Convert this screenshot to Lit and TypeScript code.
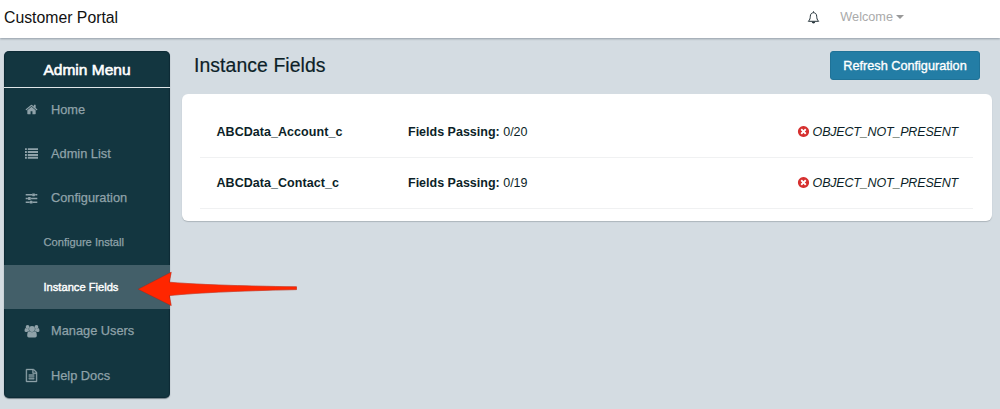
import { LitElement, html, css, svg } from "lit";
import { customElement } from "lit/decorators.js";
import { classMap } from "lit/directives/class-map.js";

const icons: Record<string, unknown> = {
  home: svg`<path d="M1472 992v480q0 26-19 45t-45 19h-384v-384h-256v384h-384q-26 0-45-19t-19-45v-480q0-1 .5-3t.5-3l575-474 575 474q1 2 1 6zm223-69l-62 74q-8 9-21 11h-3q-13 0-21-7l-692-577-692 577q-12 8-24 7-13-2-21-11l-62-74q-8-10-7-23.5t11-21.5l719-599q32-26 76-26t76 26l244 204v-195q0-14 9-23t23-9h192q14 0 23 9t9 23v408l219 182q10 8 11 21.5t-7 23.5z"/>`,
  list: svg`<path d="M0 160h256v270H0zM384 160h1408v270H384zM0 560h256v270H0zM384 560h1408v270H384zM0 960h256v270H0zM384 960h1408v270H384zM0 1360h256v270H0zM384 1360h1408v270H384z"/>`,
  sliders: svg`<path d="M96 290h870v190H96zM1400 290h296v190h-296zM1050 192h256q64 0 64 64v256q0 64-64 64h-256q-64 0-64-64V256q0-64 64-64zM96 802h296v190H96zM832 802h864v190H832zM480 704h256q64 0 64 64v256q0 64-64 64H480q-64 0-64-64V768q0-64 64-64zM96 1314h530v190H96zM1060 1314h636v190h-636zM716 1216h256q64 0 64 64v256q0 64-64 64H716q-64 0-64-64v-256q0-64 64-64z"/>`,
  users: svg`<circle cx="330" cy="384" r="245"/><circle cx="1462" cy="384" r="245"/><circle cx="896" cy="640" r="375"/><path d="M520 896q-150 5-245 128H145Q-60 1024-60 850q0-330 160-330 20 0 70 40t160 40q90 0 150-30-10 180 40 326zM1272 896q150 5 245 128h130q205 0 205-174 0-330-160-330-20 0-70 40t-160 40q-90 0-150-30 10 180-40 326zM560 940q-280 0-280 560 0 230 210 230h812q210 0 210-230 0-560-280-560-30 0-100 60t-236 60-236-60-100-60z"/>`,
  file: svg`<path d="M1596 380q28 28 48 76t20 88v1152q0 40-28 68t-68 28h-1344q-40 0-68-28t-28-68v-1600q0-40 28-68t68-28h896q40 0 88 20t76 48zm-444-244v376h376q-10-29-22-41l-313-313q-12-12-41-22zm384 1528v-1024h-416q-40 0-68-28t-28-68v-416h-768v1536h1280zm-1024-864q0-14 9-23t23-9h704q14 0 23 9t9 23v64q0 14-9 23t-23 9h-704q-14 0-23-9t-9-23v-64zm736 224q14 0 23 9t9 23v64q0 14-9 23t-23 9h-704q-14 0-23-9t-9-23v-64q0-14 9-23t23-9h704zm0 256q14 0 23 9t9 23v64q0 14-9 23t-23 9h-704q-14 0-23-9t-9-23v-64q0-14 9-23t23-9h704z"/>`,
  error: svg`<path d="M1277 1122q0-26-19-45l-181-181 181-181q19-19 19-45 0-27-19-46l-90-90q-19-19-46-19-26 0-45 19l-181 181-181-181q-19-19-45-19-27 0-46 19l-90 90q-19 19-19 46 0 26 19 45l181 181-181 181q-19 19-19 45 0 27 19 46l90 90q19 19 46 19 26 0 45-19l181-181 181 181q19 19 45 19 27 0 46-19l90-90q19-19 19-46zm387-226q0 209-103 385.5t-279.5 279.5-385.5 103-385.5-103-279.5-279.5-103-385.5 103-385.5 279.5-279.5 385.5-103 385.5 103 279.5 279.5 103 385.5z"/>`,
};

const icon = (name: string) => html`<svg class="icon ${name}" viewBox="0 0 1792 1792">${icons[name]}</svg>`;

const menu = [
  { label: "Home", icon: "home" },
  { label: "Admin List", icon: "list" },
  { label: "Configuration", icon: "sliders" },
  { label: "Configure Install", sub: true },
  { label: "Instance Fields", sub: true, active: true },
  { label: "Manage Users", icon: "users" },
  { label: "Help Docs", icon: "file" },
];

const objects = [
  { name: "ABCData_Account_c", passing: "0/20", status: "OBJECT_NOT_PRESENT" },
  { name: "ABCData_Contact_c", passing: "0/19", status: "OBJECT_NOT_PRESENT" },
];

@customElement("app-root")
export class AppRoot extends LitElement {
  static styles = css`
    :host {
      display: flex;
      flex-direction: column;
      height: 409px;
      overflow: hidden;
      background: #d4dce2;
      color: #0c1f28;
      font-family: "Liberation Sans", Arial, sans-serif;
      font-size: 13px;
      line-height: 1;
      white-space: nowrap;
    }
    * { box-sizing: border-box; }
    .icon { display: block; fill: currentColor; overflow: visible; flex: none; }
    .topbar {
      flex: none;
      height: 38px;
      display: flex;
      align-items: center;
      padding: 0 96px 4px 4px;
      background: #fff;
      box-shadow: 0 1px 2px rgba(70, 85, 95, 0.45);
    }
    .brand { flex: 1; font-size: 15.8px; color: #111; padding-top: 1px; }
    .bell { width: 13px; height: 13px; display: block; margin-right: 20px; }
    .welcome { display: flex; align-items: center; gap: 3px; color: #aaa; font-size: 12.7px; }
    .caret { border: 4px solid transparent; border-top: 4.5px solid #999; border-bottom: 0; margin-top: 1px; }
    .body { flex: 1; display: flex; align-items: flex-start; gap: 12px; padding: 13px 8px 0 4px; }
    .sidebar {
      position: relative;
      flex: none;
      width: 166px;
      height: 347px;
      background: #133640;
      border-radius: 5px;
      box-shadow: 0 1px 1px rgba(20, 40, 50, 0.5), inset 0 0 1px 1px rgba(0, 20, 35, 0.35);
    }
    .menu-title {
      height: 36.5px;
      display: flex;
      align-items: center;
      justify-content: center;
      padding-top: 1px;
      border-bottom: 1.5px solid #dfe6e9;
      color: #fff;
      font-size: 15.5px;
      -webkit-text-stroke: 0.6px #fff;
    }
    .item {
      height: 44.3px;
      display: flex;
      align-items: center;
      gap: 13px;
      padding-left: 21px;
      color: #8fa2a9;
      font-size: 12.8px;
      -webkit-text-stroke: 0.25px currentColor;
    }
    .item span { padding-top: 1px; }
    .item .icon { width: 13px; height: 13px; stroke: none; }
    .item .users { width: 14px; height: 14px; margin: 0 -0.5px; }
    .item .file { stroke: currentColor; stroke-width: 50; }
    .sub { padding-left: 39.5px; font-size: 11.15px; }
    .active { background: #435f69; color: #fff; -webkit-text-stroke: 0.4px #fff; }
    .arrow { position: absolute; left: 130px; top: 218px; width: 168px; height: 40px; overflow: visible; filter: drop-shadow(0 0.5px 0.5px rgba(60, 0, 0, 0.4)); }
    .main { flex: 1; }
    .heading { height: 43px; display: flex; align-items: flex-start; justify-content: space-between; padding: 0 12px; }
    .title { font-size: 19.4px; letter-spacing: 0.08px; padding-top: 5px; -webkit-text-stroke: 0.2px currentColor; }
    .refresh {
      width: 150px;
      height: 29px;
      padding: 1px 0 0;
      border: 1px solid #1f7297;
      border-radius: 3px;
      background: #237da5;
      color: #fff;
      font: 12.7px "Liberation Sans", Arial, sans-serif;
      -webkit-text-stroke: 0.35px #fff;
    }
    .card {
      height: 127px;
      padding: 12.5px 19px 0 18px;
      background: #fff;
      border-radius: 6px;
      box-shadow: 0 1px 1px rgba(100, 110, 115, 0.35);
    }
    .row {
      height: 51.3px;
      display: grid;
      grid-template-columns: 191.5px 1fr auto;
      align-items: center;
      padding: 1px 15px 0 16.5px;
      border-bottom: 1px solid #f0f1f2;
      font-size: 12.5px;
    }
    .name { letter-spacing: 0.05px; }
    .name, .label { font-weight: bold; }
    .status { display: flex; align-items: center; gap: 3px; font-style: italic; letter-spacing: -0.18px; }
    .status .icon { width: 13px; height: 13px; color: #d6302f; margin: -1px -0.5px 0 0; }
  `;

  render() {
    return html`
      <header class="topbar">
        <span class="brand">Customer Portal</span>
        <svg class="bell" viewBox="0 0 12 13" fill="none" stroke="#26343b">
          <path d="M6 .3v1.2M.8 10.3h10.4C9.5 8.8 9.3 7.4 9.2 5.2 9.1 3 7.8 1.7 6 1.7S2.9 3 2.8 5.2C2.7 7.4 2.5 8.8.8 10.3z" />
          <path d="M4.2 10.8h3.6q-.2 1.8-1.8 1.8t-1.8-1.8z" fill="#26343b" stroke="none" />
        </svg>
        <span class="welcome">Welcome <i class="caret"></i></span>
      </header>
      <div class="body">
        <nav class="sidebar">
          <div class="menu-title"><span>Admin Menu</span></div>
          ${menu.map((m) => html`
            <div class=${classMap({ item: true, sub: !!m.sub, active: !!m.active })}>
              ${m.icon ? icon(m.icon) : ""}<span>${m.label}</span>
            </div>`)}
          <svg class="arrow" viewBox="0 0 168 40">
            <path d="M4.5 20.2L37.2 3.3L35.3 13.2Q75 16.6 162.5 17.8V20.6Q75 22.5 35.3 26.6L37.2 36.5Z" fill="#ff2600" stroke="#e02a10" stroke-width=".5" />
          </svg>
        </nav>
        <main class="main">
          <div class="heading">
            <span class="title">Instance Fields</span>
            <button class="refresh">Refresh Configuration</button>
          </div>
          <section class="card">
            ${objects.map((o) => html`
              <div class="row">
                <span class="name">${o.name}</span>
                <span><span class="label">Fields Passing:</span> ${o.passing}</span>
                <span class="status">${icon("error")}<span>${o.status}</span></span>
              </div>`)}
          </section>
        </main>
      </div>
    `;
  }
}
